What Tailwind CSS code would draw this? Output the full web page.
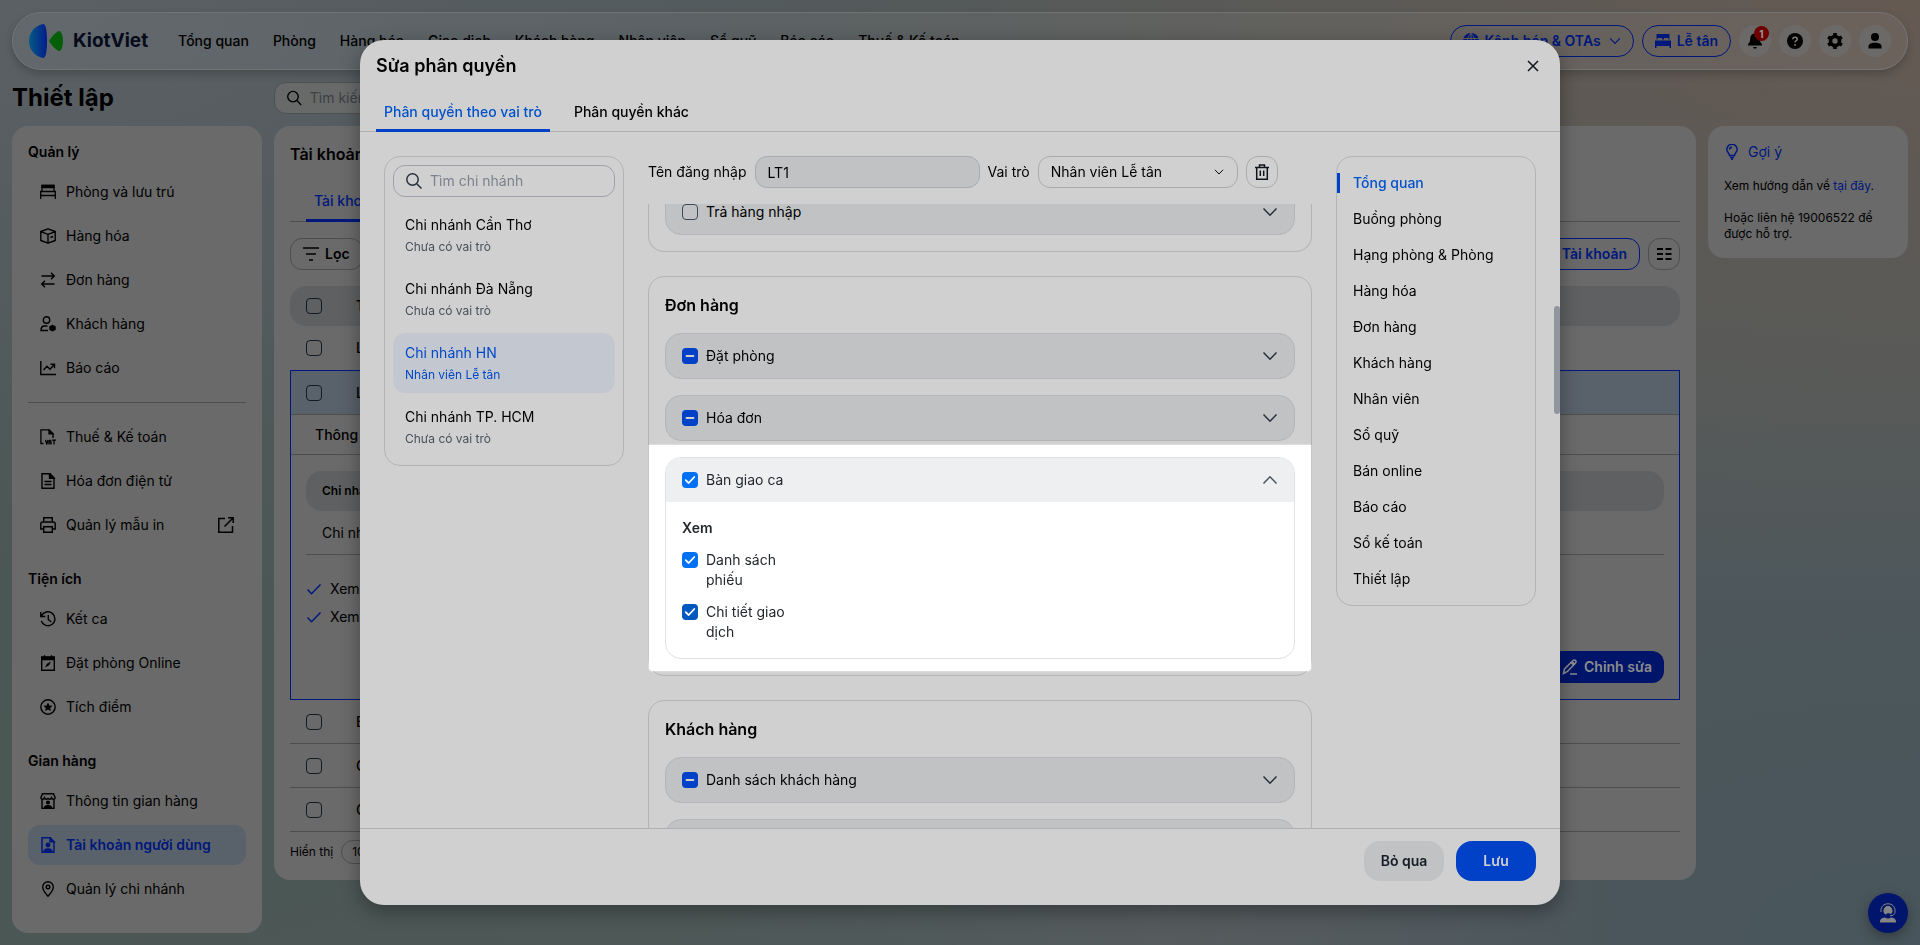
<!DOCTYPE html>
<html lang="vi">
<head>
    <meta charset="UTF-8">
    <meta name="viewport" content="width=device-width, initial-scale=1.0">
    <title>KiotViet - Thiết lập</title>
    <script src="https://cdn.jsdelivr.net/npm/@tailwindcss/browser@4"></script>
</head>
<body class="min-h-screen overflow-hidden bg-[#50595b] bg-[radial-gradient(ellipse_at_100%_0%,#655a52_0%,#655a5200_45%),radial-gradient(ellipse_at_0%_0%,#5b6064_0%,#5b606400_35%),radial-gradient(ellipse_at_0%_80%,#4a5753_0%,#4a575300_55%),radial-gradient(ellipse_at_60%_100%,#575c5f_0%,#575c5f00_30%),radial-gradient(ellipse_at_100%_100%,#48555c_0%,#48555c00_40%)] font-['Inter','Noto_Sans',sans-serif] text-sm leading-5 text-black">

    <!-- Shared icons -->
    <svg class="hidden">
        <symbol id="search" viewBox="0 0 16 16"><g fill="none" stroke="currentColor" stroke-width="1.5"><circle cx="6.5" cy="6.5" r="5.7"/><path d="M10.7 10.7 15.5 15.5"/></g></symbol>
        <symbol id="down" viewBox="0 0 16 16"><path d="M1.5 4.5 8 11.2l6.500-6.700" fill="none" stroke="currentColor" stroke-width="1.500"/></symbol>
        <symbol id="tick" viewBox="0 0 16 16"><path d="M3.700 8.200 6.700 11l5.600-6" fill="none" stroke="currentColor" stroke-width="1.800" stroke-linecap="round" stroke-linejoin="round"/></symbol>
        <symbol id="check" viewBox="0 0 16 16"><path d="M1.500 8.500 5.500 12.700 14.500 3.500" fill="none" stroke="currentColor" stroke-width="1.500"/></symbol>
        <symbol id="dash" viewBox="0 0 16 16"><path d="M4.500 8h7" fill="none" stroke="currentColor" stroke-width="1.800" stroke-linecap="round"/></symbol>
    </svg>

    <div class="flex flex-col gap-3 p-3">
        <!-- Top bar -->
        <header class="flex h-[58px] items-center rounded-full border border-[#727473] bg-white/5 px-4 shadow-[0_4px_8px_rgba(0,0,0,0.2)]">
            <a href="#" class="flex items-center gap-[10px]">
                <svg class="h-[34px] w-[34px]" viewBox="0 0 34 34">
                    <defs><linearGradient id="lg"><stop offset="0" stop-color="#055a86"/><stop offset="1" stop-color="#021d8c"/></linearGradient></defs>
                    <path d="M14 0C5 2 0 9 0 17s5 15 14 17c1.500 0 4-2 4-17S15.500 0 14 0Z" fill="url(#lg)"/>
                    <path d="M20 17c2-3 5-7.500 9.500-10 2-.7 4.500 3 4.500 10s-2.500 10.700-4.500 10C25 24.500 22 20 20 17Z" fill="#045f08"/>
                </svg>
                <span class="text-[19px] font-bold text-[#060b1c]">KiotViet</span>
            </a>
            <nav class="ml-[30px] flex gap-6 font-medium">
                <a href="#">Tổng quan</a>
                <a href="#">Phòng</a>
                <a href="#">Hàng hóa</a>
                <a href="#">Giao dịch</a>
                <a href="#">Khách hàng</a>
                <a href="#">Nhân viên</a>
                <a href="#">Sổ quỹ</a>
                <a href="#">Báo cáo</a>
                <a href="#">Thuế &amp; Kế toán</a>
            </nav>
            <div class="ml-auto flex items-center gap-2">
                <button class="flex h-8 items-center gap-[6px] rounded-2xl border border-[#00187c] px-3 font-semibold text-[#00187c]">
                    <svg class="size-4" viewBox="0 0 16 16"><circle cx="8" cy="8" r="8" fill="currentColor"/><path d="M0 5.500h16M0 10.500h16M8 0v16M8 .5c-5 5-5 10 0 15 5-5 5-10 0-15" fill="none" stroke="#666260"/></svg>
                    Kênh bán &amp; OTAs
                    <svg class="ml-[2px] size-3"><use href="#down"/></svg>
                </button>
                <button class="flex h-8 items-center gap-[6px] rounded-2xl border border-[#00187c] px-3 font-semibold text-[#00187c]">
                    <svg class="size-4" viewBox="0 0 16 16" fill="currentColor"><path d="M1.500 1h13v5.500h-1V5H9v1.500H7V5H2.500v1.500h-1Z"/><path d="M0 7.500h16V15h-1.500v-2h-13v2H0Z"/></svg>
                    Lễ tân
                </button>
                <button aria-label="Thông báo" class="relative grid size-8 place-items-center rounded-full bg-[#6c6a68]">
                    <svg class="size-4" viewBox="0 0 16 16"><path d="M8 .5C5 .5 3.300 2.800 3.300 5.500c0 3-1 4.300-2.300 5.500v1.500h14V11c-1.300-1.200-2.300-2.500-2.300-5.500C12.700 2.800 11 .5 8 .5ZM6 14h4c-.5 2.200-3.500 2.200-4 0Z"/></svg>
                    <span class="absolute top-px left-[15px] grid size-[15px] place-items-center rounded-full bg-[#6e0000] text-[10px] leading-none font-bold text-[#999]">1</span>
                </button>
                <button aria-label="Trợ giúp" class="grid size-8 place-items-center rounded-full bg-[#6c6a68]">
                    <svg class="size-4" viewBox="0 0 16 16"><circle cx="8" cy="8" r="8"/><path d="M5.800 6.200C6 3.300 10.500 3.600 10.200 6.300 10 7.800 8 7.800 8 9.500M8 11v1.700" fill="none" stroke="#85817e" stroke-width="1.500"/></svg>
                </button>
                <button aria-label="Cài đặt" class="grid size-8 place-items-center rounded-full bg-[#6c6a68]">
                    <svg class="size-4" viewBox="0 0 16 16" fill="none" stroke="#000"><circle cx="8" cy="8" r="4.500" stroke-width="3.600"/><path d="M8 0v3M8 13v3M1.100 4l2.600 1.500M12.300 10.500l2.600 1.500M1.100 12l2.600-1.500M12.300 5.500 14.900 4" stroke-width="3.600"/></svg>
                </button>
                <button aria-label="Tài khoản" class="grid size-8 place-items-center rounded-full bg-[#6c6a68]">
                    <svg class="size-4" viewBox="0 0 16 16"><circle cx="8" cy="4" r="4"/><path d="M1.500 15.500V13c0-4.500 13-4.500 13 0v2.500Z"/></svg>
                </button>
            </div>
        </header>

        <div class="flex items-center">
            <h1 class="w-[262px] text-2xl font-bold">Thiết lập</h1>
            <label class="flex h-8 w-80 items-center gap-2 rounded-xl border border-[#4e5152] bg-[#686a6a] px-3">
                <svg class="size-4"><use href="#search"/></svg>
                <input type="text" placeholder="Tìm kiếm thiết lập" class="w-full outline-none placeholder:text-[#3c4043]">
            </label>
        </div>

        <div class="flex items-start gap-3">
            <!-- Settings menu -->
            <aside class="w-[250px] shrink-0 rounded-2xl bg-[#6a6a6a] px-4 pt-4 pb-6">
                <h2 class="mb-[10px] font-semibold">Quản lý</h2>
                <nav class="flex flex-col gap-1">
                    <a href="#" class="flex h-10 items-center gap-[10px] px-3">
                        <svg class="size-4" viewBox="0 0 16 16" fill="none" stroke="currentColor" stroke-width="1.300"><path d="M2 7V1.500h12V7M.7 15V7.500h14.600V15M.7 11.500h14.600"/><path d="M2 1.500h12v2H2z" fill="currentColor"/></svg>
                        Phòng và lưu trú</a>
                    <a href="#" class="flex h-10 items-center gap-[10px] px-3">
                        <svg class="size-4" viewBox="0 0 16 16" fill="none" stroke="currentColor" stroke-width="1.400" stroke-linejoin="round"><path d="M8 .8 15.200 3.500v9L8 15.200.8 12.500v-9ZM.8 3.700 8 6.300l7.200-2.600M8 6.300v8.700M10.500 9.500l2.500-1"/></svg>
                        Hàng hóa</a>
                    <a href="#" class="flex h-10 items-center gap-[10px] px-3">
                        <svg class="size-4" viewBox="0 0 16 16" fill="none" stroke="currentColor" stroke-width="1.400"><path d="M1.500 4h12.500M11 .8 14.300 4 11 7.200M14.500 12H2M5 8.800 1.700 12 5 15.200"/></svg>
                        Đơn hàng</a>
                    <a href="#" class="flex h-10 items-center gap-[10px] px-3">
                        <svg class="size-4" viewBox="0 0 16 16" fill="none" stroke="currentColor" stroke-width="1.400"><circle cx="6.500" cy="4" r="3.200"/><path d="M7.500 10H4.500C2.300 10 1 11.500 1 14.500h7"/><path d="m12.500 9 3 1.500v3.200l-3 1.500-3-1.500v-3.200Z" fill="currentColor" stroke-width=".5"/></svg>
                        Khách hàng</a>
                    <a href="#" class="flex h-10 items-center gap-[10px] px-3">
                        <svg class="size-4" viewBox="0 0 16 16" fill="none" stroke="currentColor" stroke-width="1.400"><path d="M.8 1v13.500H16M3.500 10 7 6.300l3 3 4-4.600M10.500 4.300h4v4"/></svg>
                        Báo cáo</a>
                </nav>
                <hr class="my-[14px] border-[#4e4e4e]">
                <nav class="flex flex-col gap-1">
                    <a href="#" class="flex h-10 items-center gap-[10px] px-3">
                        <svg class="size-4" viewBox="0 0 16 16" fill="none" stroke="currentColor" stroke-width="1.300"><path d="M3.500 14.500H.9V.8H9l4 4V9"/><path d="M9 .8v4h4Z" fill="currentColor"/><path d="m5.500 11 1.300 4 1.300-4M9 15.500V12.200l1-1 1 1v3.300M9 13.800h2M12 11.200h4M14 11.200v4.300"/></svg>
                        Thuế &amp; Kế toán</a>
                    <a href="#" class="flex h-10 items-center gap-[10px] px-3">
                        <svg class="size-4" viewBox="0 0 16 16" fill="none" stroke="currentColor" stroke-width="1.400"><path d="M2 .8h8l4 4v10.400H2ZM4.500 8.500h7M4.500 11.500h7"/><path d="M9.500.8v4.500h4.500Z" fill="currentColor"/></svg>
                        Hóa đơn điện tử</a>
                    <a href="#" class="flex h-10 items-center gap-[10px] px-3">
                        <svg class="size-4" viewBox="0 0 16 16" fill="none" stroke="currentColor" stroke-width="1.400"><path d="M3.700 5V.8h8.600V5M3.700 12H.8V7c0-1.200.5-2 2-2h10.400c1.500 0 2 .8 2 2v5h-2.900M3.700 9.700h8.600v5.500H3.700Z"/></svg>
                        Quản lý mẫu in
                        <svg class="ml-auto size-4" viewBox="0 0 16 16" fill="none" stroke="currentColor" stroke-width="1.500"><path d="M7 1.500H.8v13.700h13.700V9M10 .8h5.200V6M15 1 6.500 9.500"/></svg></a>
                </nav>
                <h2 class="mt-6 mb-[10px] font-semibold">Tiện ích</h2>
                <nav class="flex flex-col gap-1">
                    <a href="#" class="flex h-10 items-center gap-[10px] px-3">
                        <svg class="size-4" viewBox="0 0 16 16" fill="none" stroke="currentColor" stroke-width="1.400"><path d="M1.500 5A7 7 0 1 1 1.300 10M.8 1v4.500h4.500M8.300 4v4.500l3 2.500"/></svg>
                        Kết ca</a>
                    <a href="#" class="flex h-10 items-center gap-[10px] px-3">
                        <svg class="size-4" viewBox="0 0 16 16" fill="none" stroke="currentColor" stroke-width="1.400"><path d="M1.700 2.500h12.600v12.700H1.700Z"/><path d="M1.700 2h12.600v2.500H1.700ZM4.500.3V2M11.500.3V2" fill="currentColor"/><path d="m5.500 12 1.500-3 3.500-2-1.500 3Z" fill="currentColor" stroke-width=".5"/></svg>
                        Đặt phòng Online</a>
                    <a href="#" class="flex h-10 items-center gap-[10px] px-3">
                        <svg class="size-4" viewBox="0 0 16 16"><circle cx="8" cy="8" r="7.200" fill="none" stroke="currentColor" stroke-width="1.400"/><path d="m8 3.500 1.400 2.900 3.100.4-2.300 2.100.6 3.100L8 10.500l-2.800 1.500.6-3.100-2.300-2.100 3.100-.4Z"/></svg>
                        Tích điểm</a>
                </nav>
                <h2 class="mt-6 mb-[10px] font-semibold">Gian hàng</h2>
                <nav class="flex flex-col gap-1">
                    <a href="#" class="flex h-10 items-center gap-[10px] px-3">
                        <svg class="size-4" viewBox="0 0 16 16" fill="none" stroke="currentColor" stroke-width="1.400"><path d="M2.500.8h11l1.700 4c-.5 2-3 2-3.700 0-.7 2-3 2-3.500 0-.5 2-2.800 2-3.500 0C3.800 6.800 1.300 6.800.8 4.800ZM2 6.500v8.700h12V6.500"/><circle cx="8" cy="9.500" r="1.300" fill="currentColor"/><path d="M4.500 15c0-3 7-3 7 0Z" fill="currentColor"/></svg>
                        Thông tin gian hàng</a>
                    <a href="#" class="flex h-10 items-center gap-[10px] rounded-xl bg-[#59616b] px-3 font-semibold text-[#00187c]">
                        <svg class="size-4" viewBox="0 0 16 16" fill="none" stroke="currentColor" stroke-width="1.500"><path d="M2 .8h8l4 4v10.400H2Z"/><path d="M10 .8v4h4Z" fill="currentColor"/><circle cx="8" cy="8" r="1.700" fill="currentColor"/><path d="M4 15c0-4 8-4 8 0Z" fill="currentColor"/></svg>
                        Tài khoản người dùng</a>
                    <a href="#" class="flex h-10 items-center gap-[10px] px-3">
                        <svg class="size-4" viewBox="0 0 16 16" fill="none" stroke="currentColor" stroke-width="1.400"><path d="M8 15.200C5 12 2.700 9 2.700 6a5.300 5.300 0 0 1 10.600 0c0 3-2.300 6-5.300 9.200Z"/><circle cx="8" cy="6" r="1.800"/></svg>
                        Quản lý chi nhánh</a>
                </nav>
            </aside>

            <!-- User accounts -->
            <main class="min-w-0 flex-1 rounded-2xl bg-[#6a6a6a] p-4">
                <h2 class="text-base font-semibold">Tài khoản người dùng</h2>
                <div class="flex h-14 items-end border-b border-[#4e4e4e] px-4">
                    <a href="#" class="-mb-px border-b-[3px] border-[#00187c] px-2 pb-2 font-medium text-[#00187c]">Tài khoản</a>
                </div>
                <div class="mt-4 flex items-center gap-2">
                    <button class="flex h-8 items-center gap-[6px] rounded-xl border border-[#4e4e4e] px-3 font-semibold">
                        <svg class="size-4" viewBox="0 0 16 16" stroke="currentColor" stroke-width="1.500"><path d="M0 2h16M3 8h10M6 14h4"/></svg>
                        Lọc
                    </button>
                    <button class="ml-auto flex h-8 items-center gap-2 rounded-xl border border-[#00187c] px-3 font-semibold text-[#00187c]">
                        <svg class="size-4" viewBox="0 0 16 16" stroke="currentColor" stroke-width="1.500"><path d="M8 1v14M1 8h14"/></svg>
                        Tài khoản
                    </button>
                    <button aria-label="Cột hiển thị" class="grid size-8 place-items-center rounded-xl border border-[#4e4e4e]">
                        <svg class="size-4" viewBox="0 0 16 16" stroke="currentColor" stroke-width="2"><path d="M1 3h6M9.500 3h6M1 8h6M9.500 8h6M1 13h6M9.500 13h6"/></svg>
                    </button>
                </div>

                <table class="mt-4 w-full border-separate border-spacing-0 text-left">
                    <thead>
                        <tr class="h-10">
                            <th class="w-[66px] rounded-l-2xl bg-[#5f6061] pl-4"><input type="checkbox" aria-label="Chọn tất cả" class="block size-4 appearance-none rounded border border-[#141a22]"></th>
                            <th class="rounded-r-2xl bg-[#5f6061] font-semibold">Tên đăng nhập</th>
                        </tr>
                    </thead>
                    <tbody>
                        <tr class="h-11">
                            <td class="pl-4"><input type="checkbox" aria-label="Chọn LT2" class="block size-4 appearance-none rounded border border-[#141a22]"></td>
                            <td class="font-medium">LT2</td>
                        </tr>
                        <tr class="h-11">
                            <td class="border-t border-l border-[#00187c] bg-[#59616b] pl-[15px]"><input type="checkbox" aria-label="Chọn LT1" class="block size-4 appearance-none rounded border border-[#141a22]"></td>
                            <td class="border-t border-r border-[#00187c] bg-[#59616b] font-medium">LT1</td>
                        </tr>
                        <tr>
                            <td colspan="2" class="border-x border-b border-[#00187c]">
                                <div class="flex h-[41px] items-center border-y border-[#4e4e4e] px-6 font-medium">Thông tin</div>
                                <div class="px-[15px] py-4">
                                    <div class="flex h-10 items-center rounded-2xl bg-[#5f6061] px-4 text-xs font-semibold">Chi nhánh</div>
                                    <div class="flex h-11 items-center border-b border-[#4e4e4e] px-4">Chi nhánh HN</div>
                                    <ul class="mt-6 flex flex-col gap-2">
                                        <li class="flex items-center gap-2"><svg class="size-4 text-[#00187c]"><use href="#check"/></svg>Xem danh sách</li>
                                        <li class="flex items-center gap-2"><svg class="size-4 text-[#00187c]"><use href="#check"/></svg>Xem chi tiết</li>
                                    </ul>
                                    <button class="mt-6 ml-auto flex h-8 items-center gap-[6px] rounded-xl bg-[#001569] px-3 font-semibold text-[#8c8c8c]">
                                        <svg class="size-4" viewBox="0 0 16 16" fill="none" stroke="currentColor" stroke-width="1.500"><path d="m1.500 14.500 1-4.500 8.500-8.500c2-1.500 4 1 2.500 2.500L5.500 12.500ZM8 15h7"/><path d="m9.500 3 3 3" stroke-width="3"/></svg>
                                        Chỉnh sửa
                                    </button>
                                </div>
                            </td>
                        </tr>
                        <tr class="h-11">
                            <td class="border-b border-[#4e4e4e] pl-4"><input type="checkbox" aria-label="Chọn E1" class="block size-4 appearance-none rounded border border-[#141a22]"></td>
                            <td class="border-b border-[#4e4e4e] font-medium">E1</td>
                        </tr>
                        <tr class="h-11">
                            <td class="border-b border-[#4e4e4e] pl-4"><input type="checkbox" aria-label="Chọn C2" class="block size-4 appearance-none rounded border border-[#141a22]"></td>
                            <td class="border-b border-[#4e4e4e] font-medium">C2</td>
                        </tr>
                        <tr class="h-11">
                            <td class="border-b border-[#4e4e4e] pl-4"><input type="checkbox" aria-label="Chọn C1" class="block size-4 appearance-none rounded border border-[#141a22]"></td>
                            <td class="border-b border-[#4e4e4e] font-medium">C1</td>
                        </tr>
                    </tbody>
                </table>
                <div class="mt-2 flex items-center gap-2 text-xs">
                    <label for="pageSize">Hiển thị</label>
                    <select id="pageSize" class="h-6 w-28 appearance-none rounded-xl border border-[#4e4e4e] px-[10px]"><option>10 dòng</option></select>
                </div>
            </main>

            <!-- Hint -->
            <aside class="w-[200px] shrink-0 rounded-2xl bg-[#6a6a6a] p-4 text-xs">
                <h2 class="flex items-center gap-2 text-sm leading-5 text-[#00187c]">
                    <svg class="size-4" viewBox="0 0 16 16" fill="none" stroke="currentColor" stroke-width="1.500"><path d="M5.500 11.500C5.500 9 2.800 8.500 2.800 5.500a5.200 5.200 0 0 1 10.400 0c0 3-2.700 3.500-2.700 6ZM5.500 5.500c0-1.500 1-2.300 2.500-2.300M6 13.500h4M7 15.300h2"/></svg>
                    Gợi ý
                </h2>
                <p class="mt-4">Xem hướng dẫn về <a href="#" class="text-[#00187c]">tại đây</a>.</p>
                <p class="mt-4">Hoặc liên hệ 19006522 để được hỗ trợ.</p>
            </aside>
        </div>
    </div>

    <!-- Support button -->
    <button aria-label="Hỗ trợ" class="fixed right-3 bottom-3 grid size-10 place-items-center rounded-full bg-[#00156b] text-[#858585] shadow-[0_4px_12px_rgba(0,0,0,0.3)]">
        <svg class="size-5" viewBox="0 0 20 20" fill="none" stroke="currentColor"><path d="M3 9C1.500-2 18.500-2 17 9c-.2 2.500-2 3.800-5 3.800"/><path d="M5.500 8.500c-.5-7.500 9.500-7.500 9 0-.2 1.200-.8 2-1.500 2.500-1.500-1.200-4.500-1.200-5 .7-1.500-.7-2.300-1.700-2.500-3.200Z" fill="currentColor" stroke="none"/><path d="M2 19.500v-1.500c.3-2.500 3-3.500 5-3.500 2 1.200 4 1.200 6 0 2 0 4.700 1 5 3.500v1.500Z" fill="currentColor" stroke="none"/></svg>
    </button>

    <!-- Permission dialog -->
    <div class="fixed inset-0 flex justify-center py-10">
        <div role="dialog" aria-labelledby="dialogTitle" class="relative flex w-[1200px] flex-col overflow-hidden rounded-3xl bg-[#d0d0d0] shadow-[0_6px_20px_rgba(0,0,0,0.35)]">
            <div class="flex h-[52px] shrink-0 items-center justify-between px-4">
                <h2 id="dialogTitle" class="text-lg font-semibold">Sửa phân quyền</h2>
                <button aria-label="Đóng" class="grid w-[22px] place-items-center">
                    <svg class="size-3" viewBox="0 0 12 12" fill="none" stroke="#10151c" stroke-width="1.500"><path d="m1 1 10 10M11 1 1 11"/></svg>
                </button>
            </div>
            <div class="flex h-10 shrink-0 gap-4 border-b border-[#b0b1b3] px-4 font-medium">
                <button class="-mb-px border-b-[3px] border-[#0041c8] px-2 pt-[3px] text-[#0052cc]">Phân quyền theo vai trò</button>
                <button class="px-2">Phân quyền khác</button>
            </div>

            <div class="flex min-h-0 flex-1 items-start gap-6 px-6 pt-6">
                <!-- Branches -->
                <div class="flex w-60 shrink-0 flex-col rounded-2xl border border-[#b3b4b6] p-2">
                    <label class="mb-2 flex h-8 items-center gap-2 rounded-xl border border-[#9fa3a9] px-3">
                        <svg class="size-4 shrink-0 text-[#27313d]"><use href="#search"/></svg>
                        <input type="text" placeholder="Tìm chi nhánh" class="w-full outline-none placeholder:text-[#7b828b]">
                    </label>
                    <div class="flex flex-col gap-1">
                        <button class="h-[60px] rounded-xl px-3 text-left">Chi nhánh Cần Thơ<span class="mt-1 block text-xs leading-4 text-[#46505c]">Chưa có vai trò</span></button>
                        <button class="h-[60px] rounded-xl px-3 text-left">Chi nhánh Đà Nẵng<span class="mt-1 block text-xs leading-4 text-[#46505c]">Chưa có vai trò</span></button>
                        <button class="h-[60px] rounded-xl bg-[#c3c8d0] px-3 text-left text-[#0048c8]">Chi nhánh HN<span class="mt-1 block text-xs leading-4">Nhân viên Lễ tân</span></button>
                        <button class="h-[60px] rounded-xl px-3 text-left">Chi nhánh TP. HCM<span class="mt-1 block text-xs leading-4 text-[#46505c]">Chưa có vai trò</span></button>
                    </div>
                </div>

                <!-- Permissions -->
                <div class="flex min-w-0 flex-1 flex-col self-stretch">
                    <div class="mb-4 flex items-center gap-2">
                        <label for="username">Tên đăng nhập</label>
                        <input id="username" type="text" value="LT1" disabled class="h-8 w-[225px] rounded-xl border border-[#a7abb0] bg-[#c0c2c4] px-3">
                        <label for="role">Vai trò</label>
                        <div class="relative">
                            <select id="role" class="h-8 w-[200px] appearance-none rounded-xl border border-[#a7abb0] px-3"><option>Nhân viên Lễ tân</option></select>
                            <svg class="pointer-events-none absolute top-[11px] right-[14px] size-[10px]"><use href="#down"/></svg>
                        </div>
                        <button aria-label="Xóa" class="grid size-8 place-items-center rounded-xl border border-[#a7abb0]">
                            <svg class="size-4" viewBox="0 0 16 16" fill="none" stroke="#10151c" stroke-width="1.500"><path d="M1 3.500h14M5.500 3V1h5v2M2.700 4v11.200h10.600V4M6.300 6.500V12M9.700 6.500V12"/></svg>
                        </button>
                    </div>

                    <div class="min-h-0 flex-1 overflow-hidden">
                        <!-- Scrolled list: the first group shows only its last row -->
                        <div class="-mt-[15px] flex flex-col gap-6">
                            <section class="rounded-b-2xl border-x border-b border-[#b3b4b6] px-4 pb-4">
                                <div class="flex h-[46px] items-center justify-between rounded-2xl border border-[#b3b5b8] bg-[#c0c2c4] px-4">
                                    <label class="flex items-center gap-2"><input type="checkbox" class="size-4 appearance-none rounded border border-[#3c4a5c]">Trả hàng nhập</label>
                                    <svg class="size-4 text-[#27313d]"><use href="#down"/></svg>
                                </div>
                            </section>

                            <section class="flex flex-col gap-4 rounded-2xl border border-[#b3b4b6] p-4">
                                <h3 class="text-base font-semibold">Đơn hàng</h3>
                                <div class="flex h-[46px] items-center justify-between rounded-2xl border border-[#b3b5b8] bg-[#c0c2c4] px-4">
                                    <label class="flex items-center gap-2">
                                        <span class="grid text-[#d0d0d0]"><input type="checkbox" class="col-start-1 row-start-1 size-4 appearance-none rounded bg-[#0041c8]"><svg class="col-start-1 row-start-1 size-4"><use href="#dash"/></svg></span>Đặt phòng
                                    </label>
                                    <svg class="size-4 text-[#27313d]"><use href="#down"/></svg>
                                </div>
                                <div class="flex h-[46px] items-center justify-between rounded-2xl border border-[#b3b5b8] bg-[#c0c2c4] px-4">
                                    <label class="flex items-center gap-2">
                                        <span class="grid text-[#d0d0d0]"><input type="checkbox" class="col-start-1 row-start-1 size-4 appearance-none rounded bg-[#0041c8]"><svg class="col-start-1 row-start-1 size-4"><use href="#dash"/></svg></span>Hóa đơn
                                    </label>
                                    <svg class="size-4 text-[#27313d]"><use href="#down"/></svg>
                                </div>
                                <!-- Spotlight on the open group -->
                                <div class="relative text-[#24282e]">
                                    <div class="absolute -inset-x-4 -inset-y-3 rounded-b bg-white shadow-[0_0_2px_#fff]"></div>
                                    <div class="relative overflow-hidden rounded-2xl border border-[#dfe1e4] bg-white">
                                        <div class="flex h-11 items-center justify-between bg-[#eeeff1] px-4">
                                            <label class="flex items-center gap-2">
                                                <span class="grid text-white"><input type="checkbox" checked class="col-start-1 row-start-1 size-4 appearance-none rounded bg-[#0070f4]"><svg class="col-start-1 row-start-1 size-4"><use href="#tick"/></svg></span>Bàn giao ca
                                            </label>
                                            <svg class="size-4 rotate-180 text-[#4a5462]"><use href="#down"/></svg>
                                        </div>
                                        <div class="flex flex-col gap-3 p-4">
                                            <h4 class="font-semibold">Xem</h4>
                                            <label class="flex w-[116px] items-start gap-2">
                                                <span class="mt-[2px] grid text-white"><input type="checkbox" checked class="col-start-1 row-start-1 size-4 appearance-none rounded bg-[#0070f4]"><svg class="col-start-1 row-start-1 size-4"><use href="#tick"/></svg></span>Danh sách phiếu
                                            </label>
                                            <label class="flex w-[116px] items-start gap-2">
                                                <span class="mt-[2px] grid text-white"><input type="checkbox" checked class="col-start-1 row-start-1 size-4 appearance-none rounded bg-[#0057bf]"><svg class="col-start-1 row-start-1 size-4"><use href="#tick"/></svg></span>Chi tiết giao dịch
                                            </label>
                                        </div>
                                    </div>
                                </div>
                            </section>

                            <section class="flex flex-col gap-4 rounded-2xl border border-[#b3b4b6] p-4">
                                <h3 class="text-base font-semibold">Khách hàng</h3>
                                <div class="flex h-[46px] items-center justify-between rounded-2xl border border-[#b3b5b8] bg-[#c0c2c4] px-4">
                                    <label class="flex items-center gap-2">
                                        <span class="grid text-[#d0d0d0]"><input type="checkbox" class="col-start-1 row-start-1 size-4 appearance-none rounded bg-[#0041c8]"><svg class="col-start-1 row-start-1 size-4"><use href="#dash"/></svg></span>Danh sách khách hàng
                                    </label>
                                    <svg class="size-4 text-[#27313d]"><use href="#down"/></svg>
                                </div>
                                <div class="h-[46px] rounded-2xl border border-[#b3b5b8] bg-[#c0c2c4]"></div>
                            </section>
                        </div>
                    </div>
                </div>

                <!-- Group index -->
                <nav class="flex w-[200px] shrink-0 flex-col rounded-2xl border border-[#b3b4b6] py-2">
                    <a href="#" class="my-2 border-l-[3px] border-[#0041c8] pl-[13px] font-medium text-[#0052cc]">Tổng quan</a>
                    <a href="#" class="px-4 py-2">Buồng phòng</a>
                    <a href="#" class="px-4 py-2">Hạng phòng &amp; Phòng</a>
                    <a href="#" class="px-4 py-2">Hàng hóa</a>
                    <a href="#" class="px-4 py-2">Đơn hàng</a>
                    <a href="#" class="px-4 py-2">Khách hàng</a>
                    <a href="#" class="px-4 py-2">Nhân viên</a>
                    <a href="#" class="px-4 py-2">Sổ quỹ</a>
                    <a href="#" class="px-4 py-2">Bán online</a>
                    <a href="#" class="px-4 py-2">Báo cáo</a>
                    <a href="#" class="px-4 py-2">Sổ kế toán</a>
                    <a href="#" class="px-4 py-2">Thiết lập</a>
                </nav>
            </div>
            <div class="absolute top-[266px] right-0 h-[108px] w-[6px] rounded-full bg-[#8f969e]"></div>

            <div class="flex shrink-0 justify-end gap-3 border-t border-[#b0b1b3] px-6 pt-3 pb-6 font-semibold">
                <button class="h-10 w-20 rounded-2xl bg-[#c0c2c4] text-[#151c26]">Bỏ qua</button>
                <button class="h-10 w-20 rounded-2xl bg-[#0041c8] text-[#d0d0d0]">Lưu</button>
            </div>
        </div>
    </div>

</body>
</html>
